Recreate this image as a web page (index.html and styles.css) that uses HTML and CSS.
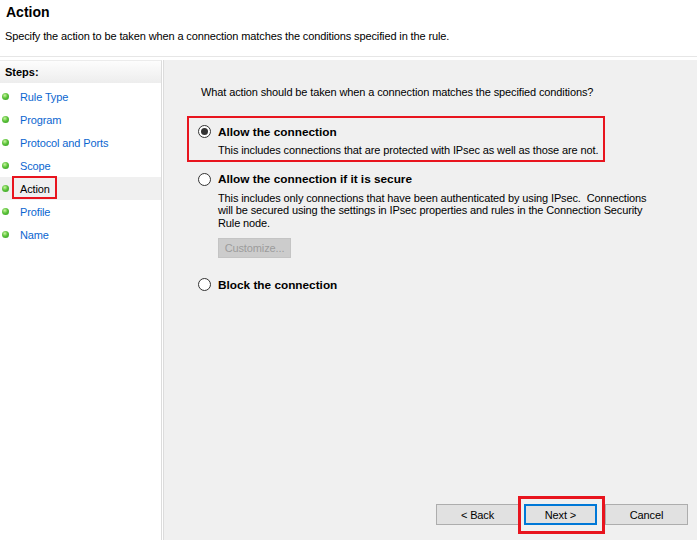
FILE: index.html
```html
<!DOCTYPE html>
<html>
<head>
<meta charset="utf-8">
<link rel="stylesheet" href="styles.css">
</head>
<body>
<div class="wizard">
  <header class="head">
    <div class="title">Action</div>
    <div class="subtitle">Specify the action to be taken when a connection matches the conditions specified in the rule.</div>
  </header>
  <div class="main">
    <aside class="steps">
      <div class="steps-head">Steps:</div>
      <ul class="step-list">
        <li class="step"><span class="dot"></span><span class="step-link">Rule Type</span></li>
        <li class="step"><span class="dot"></span><span class="step-link">Program</span></li>
        <li class="step"><span class="dot"></span><span class="step-link">Protocol and Ports</span></li>
        <li class="step"><span class="dot"></span><span class="step-link">Scope</span></li>
        <li class="step current"><span class="dot"></span><span class="step-link">Action</span><span class="annot annot-step"></span></li>
        <li class="step"><span class="dot"></span><span class="step-link">Profile</span></li>
        <li class="step"><span class="dot"></span><span class="step-link">Name</span></li>
      </ul>
    </aside>
    <section class="content">
      <p class="question">What action should be taken when a connection matches the specified conditions?</p>
      <div class="option opt-allow">
        <span class="annot annot-allow"></span>
        <div class="opt-head"><span class="radio checked"></span><span class="opt-label">Allow the connection</span></div>
        <div class="opt-desc">This includes connections that are protected with IPsec as well as those are not.</div>
      </div>
      <div class="option opt-secure">
        <div class="opt-head"><span class="radio"></span><span class="opt-label">Allow the connection if it is secure</span></div>
        <div class="opt-desc">This includes only connections that have been authenticated by using IPsec.&nbsp; Connections<br>will be secured using the settings in IPsec properties and rules in the Connection Security<br>Rule node.</div>
        <div class="btn btn-disabled customize">Customize...</div>
      </div>
      <div class="option opt-block">
        <div class="opt-head"><span class="radio"></span><span class="opt-label">Block the connection</span></div>
      </div>
      <div class="buttons">
        <div class="btn btn-back">&lt; Back</div>
        <div class="btn btn-next">Next &gt;<span class="annot annot-next"></span></div>
        <div class="btn btn-cancel">Cancel</div>
      </div>
    </section>
  </div>
</div>
</body>
</html>
```
FILE: styles.css
```css
* { box-sizing: border-box; }
html, body { margin: 0; padding: 0; }
body {
  width: 697px;
  height: 540px;
  overflow: hidden;
  background: #ffffff;
  font-family: "Liberation Sans", Arial, sans-serif;
  font-size: 11px;
  letter-spacing: -0.12px;
  color: #000;
}
.wizard {
  display: flex;
  flex-direction: column;
  height: 540px;
}
.head {
  height: 57px;
  padding: 3px 0 0 5px;
  border-bottom: 1px solid #e6e6e6;
}
.title {
  font-size: 14px;
  font-weight: bold;
  line-height: 18px;
  padding-left: 1px;
  letter-spacing: 0;
}
.subtitle {
  margin-top: 8px;
  line-height: 15px;
}
.main {
  flex: 1;
  display: flex;
  margin-top: 3px;
}
.steps {
  width: 162px;
  border-right: 1px solid #dcdcdc;
  border-top: 1px solid #ececec;
  background: #fff;
}
.steps-head {
  height: 22px;
  line-height: 23px;
  padding-left: 5px;
  font-weight: bold;
  letter-spacing: 0;
  background: linear-gradient(#fdfdfd, #ededed);
}
.step-list {
  list-style: none;
  margin: 0;
  padding: 2px 0 0 0;
}
.step {
  position: relative;
  display: flex;
  align-items: center;
  height: 23px;
  padding-left: 2px;
}
.step.current { background: #f0f0f0; }
.dot {
  width: 7px;
  height: 7px;
  border-radius: 50%;
  background: radial-gradient(circle at 40% 35%, #c8f5a0 0%, #5cc23a 45%, #2f9a1f 100%);
  margin-right: 11px;
}
.step-link { color: #0b66d0; }
.step.current .step-link { color: #000; }
.annot {
  position: absolute;
  border: 2px solid #e8141e;
  pointer-events: none;
}
.annot-step {
  left: 12px;
  top: -1px;
  width: 45px;
  height: 23px;
}
.content {
  flex: 1;
  margin-left: 1px;
  border-left: 1px solid #dcdcdc;
  background: #f0f0f0;
  display: flex;
  flex-direction: column;
  padding: 0 0 15px 34px;
}
.question {
  margin: 25px 0 0 3px;
  line-height: 15px;
}
.option { position: relative; }
.opt-allow { margin-top: 24px; }
.opt-secure { margin-top: 15px; }
.opt-block { margin-top: 19px; }
.opt-head {
  display: flex;
  align-items: center;
  height: 15px;
}
.radio {
  width: 13px;
  height: 13px;
  border: 1px solid #333;
  border-radius: 50%;
  background: #fff;
  margin-right: 7px;
  display: flex;
  align-items: center;
  justify-content: center;
}
.radio.checked::after {
  content: "";
  width: 7px;
  height: 7px;
  border-radius: 50%;
  background: #333;
}
.opt-label {
  font-weight: bold;
  font-size: 11.8px;
  letter-spacing: 0;
}
.opt-desc {
  margin: 5px 0 0 20px;
  line-height: 12.5px;
  white-space: nowrap;
}
.annot-allow {
  left: -11px;
  top: -8px;
  width: 418px;
  height: 46px;
}
.btn {
  position: relative;
  display: flex;
  align-items: center;
  justify-content: center;
  height: 21px;
  border: 1px solid #adadad;
  background: #e1e1e1;
  color: #000;
}
.customize {
  margin: 9px 0 0 20px;
  width: 73px;
  height: 20px;
  border-color: #c4c4c4;
  background: #cccccc;
  color: #9c9c9c;
}
.buttons {
  margin-top: auto;
  display: flex;
  padding-left: 238px;
}
.btn-back { width: 83px; }
.btn-next {
  width: 73px;
  margin-left: 5px;
  border: 2px solid #0078d7;
}
.btn-cancel {
  width: 83px;
  margin-left: 8px;
}
.annot-next {
  left: -8px;
  top: -10px;
  width: 87px;
  height: 38px;
  border-width: 3px;
}
```
